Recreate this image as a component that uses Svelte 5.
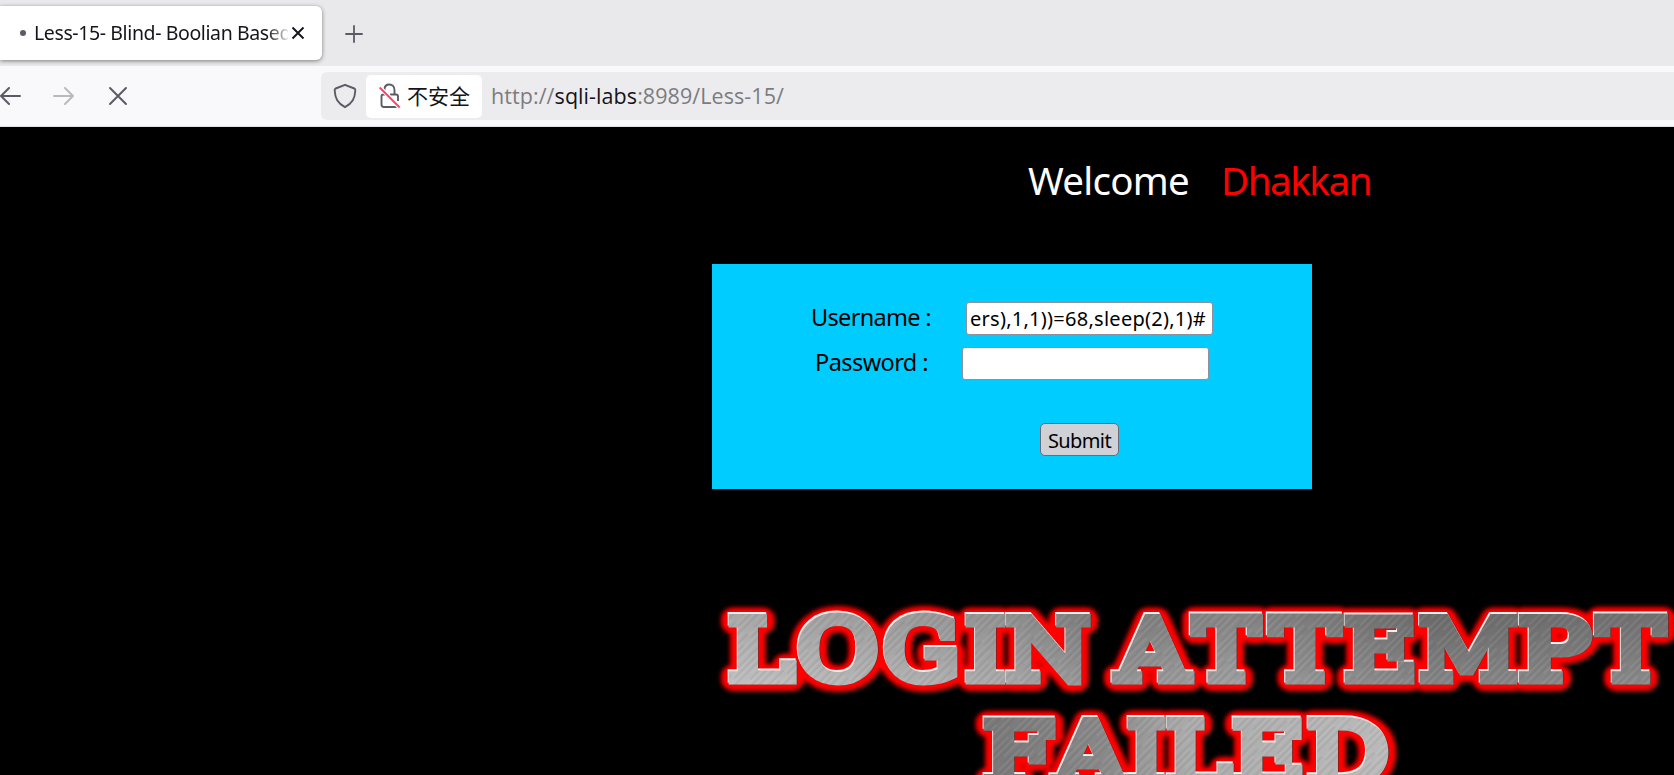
<script>
  import { onMount } from 'svelte';

  // Letters of the banner with the left and right edge of each glyph's ink.
  const rows = [
    { base: 684, letters: [['L',728,797],['O',797,879],['G',883,958],['I',965,1006],['N',1006,1091],['A',1111,1195],['T',1189,1264],['T',1266,1344],['E',1344,1415],['M',1419,1518],['P',1518,1593],['T',1593,1669]] },
    { base: 787, letters: [['F',983,1056],['A',1049,1133],['I',1127,1166],['L',1166,1234],['E',1232,1303],['D',1307,1389]] }
  ];
  // Stroke that thickens the serif face into a slab.
  const SLAB = 9;
  let glyphs = $state([]);

  onMount(() => {
    const ctx = document.createElement('canvas').getContext('2d');
    ctx.font = '84px "DejaVu Serif"';
    glyphs = rows.flatMap(({ base, letters }) => letters.map(([ch, l, r]) => {
      const m = ctx.measureText(ch);
      const sx = (r - l) / (m.actualBoundingBoxRight + m.actualBoundingBoxLeft + SLAB);
      return { ch, t: `translate(${l + (SLAB / 2 + m.actualBoundingBoxLeft) * sx} ${base - SLAB / 2}) scale(${sx} 1)` };
    }));
  });

  // Tracks a run of text so that it fills the given width.
  function track(node, width) {
    const n = node.textContent.length;
    node.style.letterSpacing = (width - node.getBoundingClientRect().width) / n + 'px';
  }
</script>

<div class="window">
  <div class="tabs">
    <div class="tab">
      <i class="dot"></i>
      <div class="title"><span use:track={257}>Less-15- Blind- Boolian Based</span></div>
      <svg class="close" width="14" height="14" viewBox="0 0 14 14"><path d="M1.5 1.5l11 11M12.5 1.5l-11 11" stroke="#15141a" stroke-width="1.9" /></svg>
    </div>
    <svg class="plus" width="18" height="18" viewBox="0 0 18 18"><path d="M9 .3v17.4M.3 9h17.4" stroke="#5b5b66" stroke-width="1.8" /></svg>
  </div>
  <div class="toolbar">
    <svg width="22" height="20" viewBox="0 0 22 20" fill="none" stroke="#5b5b66" stroke-width="2" stroke-linecap="round" stroke-linejoin="round"><path d="M20 10H1M9 2L1 10l8 8" /></svg>
    <svg class="fwd" width="22" height="20" viewBox="0 0 22 20" fill="none" stroke="#b9b9be" stroke-width="2" stroke-linecap="round" stroke-linejoin="round"><path d="M1 10h19M12 2l8 8-8 8" /></svg>
    <svg class="stop" width="20" height="20" viewBox="0 0 20 20" fill="none" stroke="#5b5b66" stroke-width="2" stroke-linecap="round"><path d="M2 2l16 16M18 2L2 18" /></svg>
    <div class="address">
      <svg class="shield" width="24" height="26" viewBox="0 0 24 26" fill="none" stroke="#5b5b66" stroke-width="1.9" stroke-linejoin="round"><path d="M12 1.8L21.3 5.5Q22.5 6 22.3 7.5C21.9 15.5 19.5 20 12 24.2C4.500 20 2.100 15.500 1.700 7.500Q1.500 6 2.700 5.500Z" /></svg>
      <div class="identity">
        <svg width="22" height="26" viewBox="0 0 22 26" fill="none" stroke-width="1.9"><path d="M5.500 7V6.500C5.500 3 7.600 1.500 10.400 1.500S15.500 3.500 15.500 7V11.500H17Q19 11.500 19 13.500V18M6 11.500H4.500Q2.500 11.500 2.500 13.500V21.500Q2.500 24 5 24H16.500Q18 24 18.700 23M15.500 11.500H11" stroke="#5b5b66" /><path d="M1 4.500L20.500 24.500" stroke="#fff" stroke-width="4" /><path d="M.7 4.500L20.700 24.500" stroke="#ff4468" stroke-width="1.9" /></svg>
        <span class="zh">不安全</span>
      </div>
      <span class="url" use:track={293}>http://<b>sqli-labs</b>:8989/Less-15/</span>
    </div>
  </div>
  <main>
    <h1><span use:track={161}>Welcome</span><span class="name" use:track={150}>Dhakkan</span></h1>
    <form>
      <div class="row user"><label for="u"><span use:track={120}>Username :</span></label><div class="field" id="u"><span use:track={236}>ers),1,1))=68,sleep(2),1)#</span></div></div>
      <div class="row pass"><label for="p"><span use:track={113}>Password :</span></label><div class="field" id="p"></div></div>
      <button type="button"><span use:track={63}>Submit</span></button>
    </form>
    <svg class="banner" width="974" height="187" viewBox="700 588 974 187">
      <defs>
        <g id="word">{#each glyphs as g}<text transform={g.t}>{g.ch}</text>{/each}</g>
        <linearGradient id="steel" gradientUnits="userSpaceOnUse" x1="710" y1="0" x2="1674" y2="0">
          <stop offset="0" stop-color="#bcbcbc" /><stop offset=".3" stop-color="#a0a0a0" /><stop offset=".4" stop-color="#858585" /><stop offset=".54" stop-color="#929292" /><stop offset=".75" stop-color="#747474" /><stop offset="1" stop-color="#7b7b7b" />
        </linearGradient>
        <linearGradient id="shine" x1="0" y1="0" x2="0" y2="1"><stop offset="0" stop-color="#000" stop-opacity=".12" /><stop offset="1" stop-color="#fff" stop-opacity=".15" /></linearGradient>
        <linearGradient id="steel2" gradientUnits="userSpaceOnUse" x1="980" y1="0" x2="1390" y2="0"><stop offset="0" stop-color="#777" /><stop offset=".3" stop-color="#888" /><stop offset=".5" stop-color="#aaa" /><stop offset="1" stop-color="#bababa" /></linearGradient>
        <pattern id="brush" width="17" height="40" patternUnits="userSpaceOnUse" patternTransform="rotate(45)"><path d="M1 0v40M8 0v30M13 10v30" stroke="#444" stroke-opacity=".16" /><path d="M4 0v25M10 8v32M15 0v40" stroke="#fff" stroke-opacity=".12" /></pattern>
        <mask id="cut" maskUnits="userSpaceOnUse" x="700" y="588" width="974" height="200"><use href="#word" fill="#fff" stroke="#fff" stroke-width={SLAB} /></mask>
        <filter id="glow" x="-5%" y="-20%" width="110%" height="140%"><feGaussianBlur stdDeviation="2.2" /></filter>
      </defs>
      <use href="#word" fill="#f00" stroke="#f00" stroke-width={SLAB + 13} stroke-linejoin="round" filter="url(#glow)" />
      <use href="#word" fill="#702020" stroke="#702020" stroke-width={SLAB} transform="translate(.7 .7)" />
      <use href="#word" fill="#f3eded" stroke="#f3eded" stroke-width={SLAB} transform="translate(-1.100 -1.100)" />
      <g mask="url(#cut)"><rect x="700" y="600" width="974" height="95" fill="url(#steel)" /><rect x="700" y="600" width="974" height="95" fill="url(#shine)" /><rect x="700" y="705" width="974" height="80" fill="url(#steel2)" /><rect x="700" y="600" width="974" height="185" fill="url(#brush)" /></g>
    </svg>
  </main>
</div>

<style>
  :global(body) { margin: 0; background: #000; overflow: hidden; }
  .window { width: 1674px; height: 775px; overflow: hidden; display: flex; flex-direction: column; background: #000; font-family: "Open Sans", "Noto Sans", sans-serif; box-sizing: border-box; }
  span { white-space: nowrap; }
  .tabs { height: 66px; flex: none; background: #e9e9eb; display: flex; align-items: flex-start; padding-top: 6px; box-sizing: border-box; }
  .tab { width: 322px; height: 54px; flex: none; box-sizing: border-box; background: #fff; border-radius: 0 6px 6px 0; box-shadow: 0 1px 4px #0007; display: flex; align-items: center; padding-left: 20px; }
  .dot { width: 6px; height: 6px; border-radius: 50%; background: #5b5b66; flex: none; }
  .title { width: 254px; margin-left: 8px; overflow: hidden; font: 19.500px/30px "Noto Sans", sans-serif; color: #15141a; mask-image: linear-gradient(to right, #000 233px, transparent 257px); }
  .title span { display: inline-block; }
  .close { margin-left: 3px; }
  .plus { margin: 19px 0 0 23px; }
  .toolbar { height: 61px; flex: none; background: #f9f9fb; display: flex; align-items: center; box-sizing: border-box; border-bottom: 1px solid #e0e0e4; }
  .toolbar > svg { flex: none; }
  .fwd { margin-left: 31px; }
  .stop { margin-left: 33px; }
  .address { margin-left: 193px; width: 1400px; flex: none; height: 48px; background: #ececee; border-radius: 6px 0 0 6px; display: flex; align-items: center; }
  .shield { margin-left: 12px; flex: none; }
  .identity { margin-left: 9px; width: 116px; height: 43px; background: #fff; border-radius: 5px; display: flex; align-items: center; flex: none; box-sizing: border-box; padding-left: 13px; }
  .zh { font: 21px/28px "Noto Sans CJK SC", sans-serif; margin: 0 0 2px 6px; color: #15141a; }
  .url { margin-left: 9px; font-size: 21.500px; line-height: 30px; color: #7c7c80; display: block; }
  .url b { font-weight: 400; color: #15141a; }
  main { height: 648px; display: flex; flex-direction: column; align-items: flex-start; }
  h1 { margin: 25px 0 0 1028px; height: 112px; font: 400 38.500px/56px "Noto Sans", sans-serif; color: #fff; display: flex; gap: 32px; }
  .name { color: #f00; }
  form { width: 600px; height: 225px; margin-left: 712px; background: #0cf; box-sizing: border-box; padding-top: 38px; flex: none; color: #000; }
  .row { display: flex; align-items: center; height: 33px; font: 23.500px/32px "Noto Sans", sans-serif; }
  .user { padding-left: 99px; }
  .pass { padding-left: 103px; margin-top: 12px; }
  label { width: 155px; margin-bottom: 3px; flex: none; }
  .pass label { width: 147px; }
  label span { display: inline-block; }
  .field { width: 247px; height: 33px; border: 1px solid #8f8f9d; border-radius: 3px; background: #fff; box-sizing: border-box; display: flex; align-items: center; justify-content: flex-end; padding: 0 6px 0 5px; overflow: hidden; font: 20px/30px "Noto Sans", sans-serif; color: #000; }
  .field span { overflow: hidden; flex: none; }
  button { display: flex; align-items: center; justify-content: center; width: 79px; height: 33px; margin: 43px 0 0 328px; border: 1px solid #6c6c78; border-radius: 5px; background: #d0d0d7; padding: 2px 0 0; font: 20px/28px "Noto Sans", sans-serif; color: #000; }
  .banner { margin: 99px 0 0 700px; flex: none; display: block; }
  .banner text { font: 84px "DejaVu Serif", serif; }
</style>
